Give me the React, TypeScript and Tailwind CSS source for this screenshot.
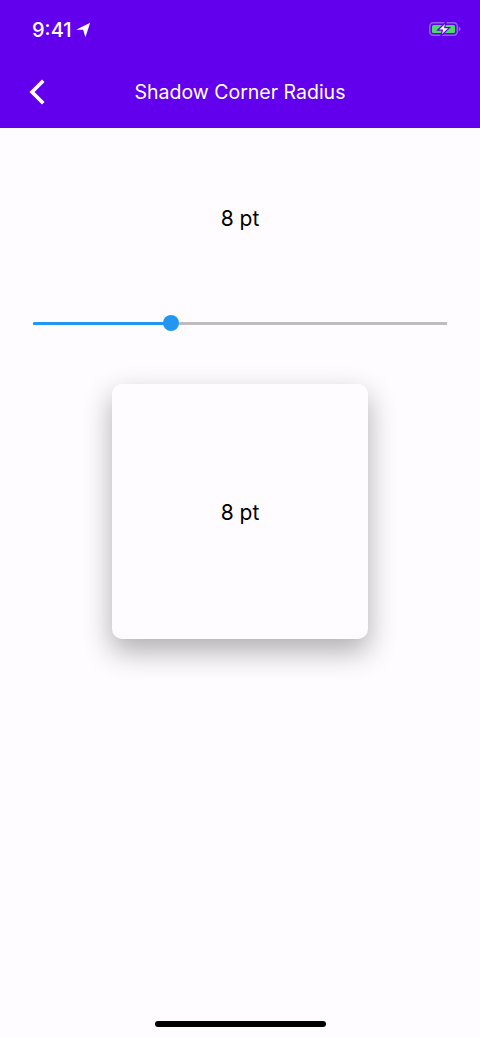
import { useState } from "react";

const font = "font-['Inter',sans-serif]";

function StatusBar() {
  return (
    <div className="flex h-[48px] items-start justify-between pl-[32px] pr-[18px] pt-[17px]">
      <div className="flex items-center gap-[3px]">
        <span className="text-[20px] leading-[26px] font-medium text-white">9:41</span>
        <svg width="16" height="16" viewBox="0 0 15 15">
          <path d="M14.2.8 1 7.2h6.6L9.8 14.2z" fill="#fff" />
        </svg>
      </div>
      <svg width="32" height="16" viewBox="0 0 32 16" className="mt-[4px] mr-[1px]">
        <rect x="0.75" y="1.75" width="27.5" height="12.5" rx="3.5" fill="none" stroke="#9160f2" strokeWidth="1.5" />
        <rect x="3" y="4" width="23" height="8" rx="1.5" fill="#4cd964" />
        <path d="M29.7 5.6c1.1.4 1.8 1.3 1.8 2.4s-.7 2-1.8 2.4z" fill="#9160f2" />
        <path d="M17.2 1 8.6 9.2h4.8L11.8 15l8.8-8.4h-4.9z" fill="#fff" stroke="#6200ee" strokeWidth="1.2" />
      </svg>
    </div>
  );
}

function Header() {
  return (
    <div className="relative flex h-[80px] items-center justify-center bg-[#6200ee] pt-[8px]">
      <button className="absolute left-[27px] top-[31px]">
        <svg width="18" height="26" viewBox="0 0 18 26" className="block">
          <path d="M15 3 5 13 15 23" fill="none" stroke="#fff" strokeWidth="3.6" strokeLinecap="square" />
        </svg>
      </button>
      <h1 className="text-[19.5px] leading-[28px] font-normal text-white">Shadow Corner Radius</h1>
    </div>
  );
}

export default function App() {
  const [radius] = useState(8);
  const percent = (radius / 24) * 100;

  return (
    <main className={`${font} flex h-[1038px] w-[480px] flex-col overflow-hidden bg-[#fffcff] text-black`}>
      <div className="bg-[#6200ee]">
        <StatusBar />
        <Header />
      </div>

      <div className="flex flex-1 flex-col items-center">
        <p className="mt-[77px] text-[21px] leading-[27px]">{radius} pt</p>

        <div className="mt-[79px] h-[24px] w-[414px] self-center">
          <div className="relative top-[10.5px] h-[3px] bg-[#bdbdbd]">
            <div className="h-full rounded-l-full bg-[#2196f3]" style={{ width: `${percent}%` }} />
            <div
              className="absolute top-[-7px] ml-[-8px] h-[16px] w-[16px] rounded-full bg-[#2196f3]"
              style={{ left: `${percent}%` }}
            />
          </div>
        </div>

        <div className="mt-[49px] flex h-[255px] w-[256px] items-center justify-center rounded-[10px] bg-[#fffcff] pt-[2px] shadow-[0_12px_28px_1px_rgba(0,0,0,0.3)]">
          <p className="text-[21px] leading-[27px]">{radius} pt</p>
        </div>
      </div>

      <div className="flex justify-center pb-[11px]">
        <div className="ml-[1px] h-[6px] w-[171px] rounded-full bg-black" />
      </div>
    </main>
  );
}
